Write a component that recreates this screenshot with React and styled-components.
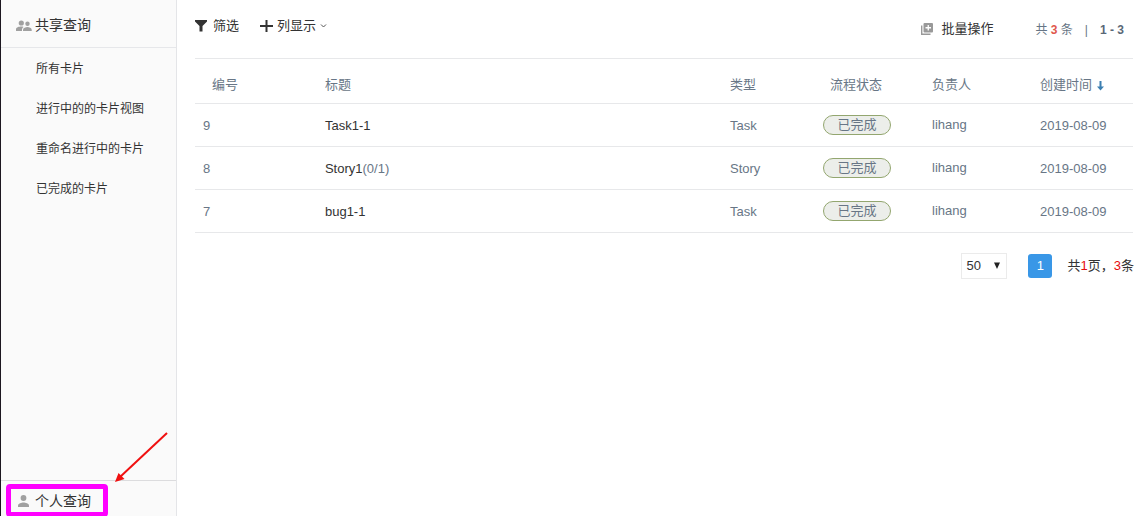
import React from 'react';
import styled, { createGlobalStyle } from 'styled-components';

const GlobalStyle = createGlobalStyle`
  * {
    box-sizing: border-box;
  }
  body {
    margin: 0;
    background: #fff;
    color: #333;
    font: 13px/20px 'Liberation Sans', 'Noto Sans CJK SC', sans-serif;
  }
  button,
  select {
    padding: 0;
    border: 0;
    background: none;
    color: inherit;
    font: inherit;
    cursor: pointer;
  }
  a {
    color: inherit;
    text-decoration: none;
  }
`;

const Page = styled.div`
  display: flex;
  height: 100vh;
  overflow: hidden;
`;

const Sidebar = styled.aside`
  position: relative;
  display: flex;
  flex-direction: column;
  flex: 0 0 177px;
  border-left: 1px solid #1c1720;
  border-right: 1px solid #e4e5e8;
  background: #fafafa;
`;

const GroupTitle = styled.h2`
  display: flex;
  align-items: center;
  gap: 3px;
  margin: 0;
  padding: 15px 0 11px 15px;
  border-bottom: 1px solid #e6e7ea;
  font-size: 14px;
  font-weight: normal;
  line-height: 21px;
`;

const QueryList = styled.ul`
  flex: 1;
  margin: 0;
  padding: 1px 0 0;
  list-style: none;
`;

const QueryItem = styled.li`
  padding-left: 35px;
  font-size: 12px;
  line-height: 40px;
`;

const PersonalGroup = styled.div`
  display: flex;
  align-items: center;
  gap: 3px;
  height: 36px;
  padding: 4px 0 0 15px;
  border-top: 1px solid #dcdcde;
  font-size: 14px;
`;

const Highlight = styled.div`
  position: absolute;
  left: 5px;
  bottom: -1px;
  width: 102px;
  height: 33px;
  border: 5px solid #ff00ff;
  border-radius: 4px;
`;

const Arrow = styled.svg`
  position: absolute;
  left: 113px;
  bottom: 33px;
`;

const Main = styled.main`
  flex: 1;
  min-width: 0;
  padding: 0 11px 0 18px;
`;

const Toolbar = styled.div`
  display: flex;
  align-items: center;
  height: 58px;
  padding-bottom: 6px;
`;

const ToolButton = styled.button`
  display: flex;
  align-items: center;
  gap: ${(props) => props.$gap || 4}px;
  margin-right: 21px;
`;

const BatchArea = styled.div`
  display: flex;
  align-items: center;
  margin-left: auto;
  padding-top: 5px;
`;

const Summary = styled.div`
  display: flex;
  gap: 12px;
  padding: 2px 9px 0 21px;
  color: #667585;
  font-size: 12px;
  b {
    color: #5a6877;
  }
  em {
    color: #e0574c;
    font-style: normal;
    font-weight: bold;
  }
`;

const Table = styled.table`
  width: 100%;
  border-top: 1px solid #e7e8ea;
  border-collapse: separate;
  border-spacing: 0;
  table-layout: fixed;
  color: #687686;
`;

const Head = styled.th`
  width: ${(props) => props.$width};
  height: 45px;
  padding: 8px 0 0 ${(props) => props.$indent || 8}px;
  border-bottom: 1px solid #e7e8ea;
  font-weight: normal;
  text-align: left;
  white-space: nowrap;
  svg {
    margin-left: 5px;
    vertical-align: -2px;
  }
`;

const Cell = styled.td`
  height: 43px;
  padding: ${(props) => (props.$raised ? 0 : 2)}px 0 0 8px;
  border-bottom: 1px solid #e7e8ea;
  white-space: nowrap;
  a {
    color: #333;
  }
`;

const Status = styled.span`
  display: block;
  width: 68px;
  height: 20px;
  border: 1px solid #93a66f;
  border-radius: 10px;
  background: #eceeea;
  line-height: 18px;
  text-align: center;
`;

const Pagination = styled.div`
  display: flex;
  align-items: center;
  justify-content: flex-end;
  margin-top: 20px;
`;

const SizePicker = styled.label`
  display: grid;
  align-items: center;
  width: 46px;
  height: 26px;
  border: 1px solid #ebebeb;
  & > * {
    grid-area: 1 / 1;
  }
  select {
    width: 100%;
    padding-left: 4px;
    appearance: none;
  }
  svg {
    justify-self: end;
    margin-right: 5px;
    pointer-events: none;
  }
`;

const PageButton = styled.button`
  width: 24px;
  height: 24px;
  margin: 0 15px 0 21px;
  border-radius: 3px;
  background: #3997e7;
  color: #fff;
`;

const Total = styled.span`
  margin-right: -1px;
  em {
    color: #e60c0c;
    font-style: normal;
  }
`;

const queries = ['所有卡片', '进行中的的卡片视图', '重命名进行中的卡片', '已完成的卡片'];

const cards = [
  { id: 9, title: 'Task1-1', type: 'Task' },
  { id: 8, title: 'Story1', progress: '(0/1)', type: 'Story' },
  { id: 7, title: 'bug1-1', type: 'Task' },
];

const GroupIcon = () => (
  <svg width="16" height="16" viewBox="0 0 16 16" fill="#a0a0a0">
    <circle cx="5.3" cy="5" r="2.6" />
    <circle cx="11.5" cy="5.800" r="2.200" />
    <path d="M0 13v-1.600C0 9.400 3 8.600 5.300 8.600c.8 0 1.600.1 2.300.3C6.500 9.600 6 10.500 6 11.600V13z" />
    <path d="M7 13v-1.300c0-1.800 2.700-2.700 4.400-2.700s4.300.9 4.300 2.700V13z" />
  </svg>
);

const PersonIcon = () => (
  <svg width="16" height="16" viewBox="0 0 16 16" fill="#a0a0a0">
    <circle cx="7.500" cy="5" r="2.900" />
    <path d="M2 14v-1.600c0-2 3.500-3 5.500-3s5.500 1 5.500 3V14z" />
  </svg>
);

const App = () => (
  <>
    <GlobalStyle />
    <Page>
      <Sidebar>
        <GroupTitle>
          <GroupIcon />
          共享查询
        </GroupTitle>
        <QueryList>
          {queries.map((query) => (
            <QueryItem key={query}>
              <a href="#query">{query}</a>
            </QueryItem>
          ))}
        </QueryList>
        <PersonalGroup>
          <PersonIcon />
          个人查询
        </PersonalGroup>
        <Highlight />
        <Arrow width="56" height="52" viewBox="0 0 56 52">
          <path d="M53 2 6 46" stroke="#f01010" strokeWidth="2" />
          <path d="M1 51 4.500 42l6 6z" fill="#f01010" />
        </Arrow>
      </Sidebar>
      <Main>
        <Toolbar>
          <ToolButton type="button" $gap={6}>
            <svg width="12" height="12" viewBox="0 0 12 12" fill="#333">
              <path d="M0 0h12v1.500L7.500 6v5.500h-3V6L0 1.500z" />
            </svg>
            筛选
          </ToolButton>
          <ToolButton type="button">
            <svg width="13" height="12" viewBox="0 0 13 12" fill="#333">
              <path d="M5.500 0h2v5H13v2H7.500v5h-2V7H0V5h5.500z" />
            </svg>
            列显示
            <svg width="7" height="6" viewBox="0 0 7 6" fill="none">
              <path d="m1 1.500 2.500 2.500L6 1.500" stroke="#555" />
            </svg>
          </ToolButton>
          <BatchArea>
            <ToolButton type="button" $gap={8}>
              <svg width="12" height="12" viewBox="0 0 12 12">
                <path d="M.7 2.500v8.800h8.800" fill="none" stroke="#999" strokeWidth="1.400" />
                <rect x="2.500" width="9.500" height="9.500" rx="1" fill="#999" />
                <path d="M7.250 2v5.500M4.500 4.750H10" stroke="#fff" strokeWidth="1.300" />
              </svg>
              批量操作
            </ToolButton>
            <Summary>
              <span>
                共 <em>3</em> 条
              </span>
              <span>|</span>
              <b>1 - 3</b>
            </Summary>
          </BatchArea>
        </Toolbar>
        <Table>
          <thead>
            <tr>
              <Head $width="13%" $indent={17}>编号</Head>
              <Head>标题</Head>
              <Head $width="93px">类型</Head>
              <Head $width="109px" $indent={15}>流程状态</Head>
              <Head $width="108px">负责人</Head>
              <Head $width="101px">
                创建时间
                <svg width="7" height="10" viewBox="0 0 7 10" fill="#3c7fb1">
                  <path d="M2.500 0h2v5.500H7L3.500 9.500 0 5.500h2.500z" />
                </svg>
              </Head>
            </tr>
          </thead>
          <tbody>
            {cards.map((card) => (
              <tr key={card.id}>
                <Cell>{card.id}</Cell>
                <Cell>
                  <a href="#card">{card.title}</a>
                  {card.progress}
                </Cell>
                <Cell>{card.type}</Cell>
                <Cell $raised>
                  <Status>已完成</Status>
                </Cell>
                <Cell $raised>lihang</Cell>
                <Cell>2019-08-09</Cell>
              </tr>
            ))}
          </tbody>
        </Table>
        <Pagination>
          <SizePicker>
            <select aria-label="每页条数" defaultValue="50">
              <option>50</option>
            </select>
            <svg width="8" height="8" viewBox="0 0 8 8" fill="#222">
              <path d="M1 0.500h6L4 7z" />
            </svg>
          </SizePicker>
          <PageButton type="button">1</PageButton>
          <Total>
            共<em>1</em>页，<em>3</em>条
          </Total>
        </Pagination>
      </Main>
    </Page>
  </>
);

export default App;
